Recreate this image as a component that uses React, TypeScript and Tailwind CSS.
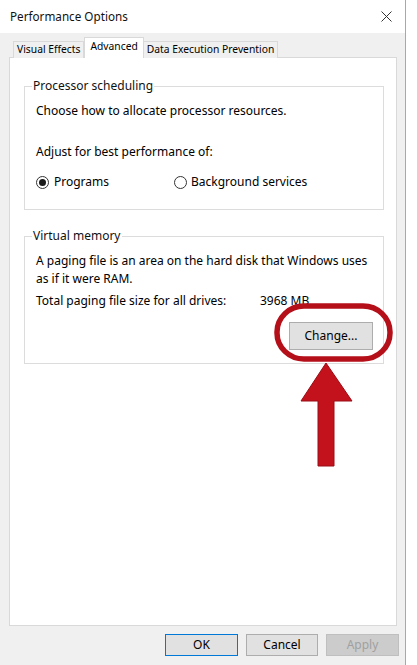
import React from "react";

function Radio({ checked }: { checked: boolean }) {
  return (
    <span className="w-[13px] h-[13px] rounded-full border border-[#333333] bg-white flex items-center justify-center shrink-0">
      {checked && <span className="w-[7px] h-[7px] rounded-full bg-[#1a1a1a]" />}
    </span>
  );
}

export default function App() {
  return (
    <div
      className="relative w-[417px] h-[665px] bg-white overflow-hidden flex text-black"
      style={{ fontFamily: '"Noto Sans", "Open Sans", sans-serif' }}
    >
      <div className="w-[406px] h-full flex flex-col bg-[#f0f0f0] border-r border-[#a8a8a8] shrink-0">
        {/* Title bar */}
        <div className="h-[33px] bg-white flex items-center justify-between pl-[10px] pr-[13px] shrink-0">
          <span className="text-[11.7px] text-[#111]">Performance Options</span>
          <svg width="11" height="11" viewBox="0 0 11 11" className="mt-[-1px]">
            <path d="M0.5 0.5 L10.5 10.5 M10.5 0.5 L0.5 10.5" stroke="#333" strokeWidth="1" fill="none" />
          </svg>
        </div>
        {/* Tabs */}
        <div className="h-[24px] flex items-end pl-[13px] relative z-10 shrink-0 text-[10.3px]">
          <div className="h-[17px] px-[3px] flex items-center border border-b-0 border-[#d9d9d9] bg-[#f0f0f0] mb-[-1px]">
            Visual Effects
          </div>
          <div className="h-[21px] px-[5px] flex items-center border border-b-0 border-[#d9d9d9] bg-white pb-[3px] mb-[-1px]">
            Advanced
          </div>
          <div className="h-[17px] px-[3px] flex items-center border border-b-0 border-l-0 border-[#d9d9d9] bg-[#f0f0f0] mb-[-1px]">
            Data Execution Prevention
          </div>
        </div>
        {/* Panel */}
        <div className="ml-[9px] w-[388px] h-[569px] bg-white border border-[#d9d9d9] pl-[14px] pt-[20px] shrink-0 text-[12px]">
          <fieldset className="w-[360px] h-[132px] border border-[#dcdcdc]">
            <legend className="ml-[7px] px-[1px] leading-[16px] text-[#111]">Processor scheduling</legend>
            <div className="pl-[11px]">
              <div className="leading-[18px] mt-[8px]">Choose how to allocate processor resources.</div>
              <div className="leading-[18px] mt-[23px]">Adjust for best performance of:</div>
              <div className="flex items-center mt-[12px] h-[18px]">
                <div className="flex items-center w-[138px] gap-[5px]">
                  <Radio checked />
                  <span>Programs</span>
                </div>
                <div className="flex items-center gap-[4px]">
                  <Radio checked={false} />
                  <span>Background services</span>
                </div>
              </div>
            </div>
          </fieldset>
          <fieldset className="w-[360px] h-[136px] border border-[#dcdcdc] mt-[18px]">
            <legend className="ml-[7px] px-[1px] leading-[16px] text-[#111]">Virtual memory</legend>
            <div className="pl-[11px]">
              <div className="leading-[18px] mt-[8px]">
                A paging file is an area on the hard disk that Windows uses
                <br />
                as if it were RAM.
              </div>
              <div className="flex leading-[18px] mt-[4px]">
                <span className="w-[224px]">Total paging file size for all drives:</span>
                <span>3968 MB</span>
              </div>
              <div className="flex justify-end pr-[10px] mt-[12px]">
                <button className="w-[84px] h-[28px] bg-[#e1e1e1] border border-[#adadad] text-[12px]">Change...</button>
              </div>
            </div>
          </fieldset>
        </div>
        {/* Buttons */}
        <div className="flex justify-end gap-[8px] pr-[6px] mt-[8px] text-[12px]">
          <button className="w-[73px] h-[22px] bg-[#e1e1e1] border border-[#0078d7]">OK</button>
          <button className="w-[72px] h-[22px] bg-[#e1e1e1] border border-[#adadad]">Cancel</button>
          <button className="w-[73px] h-[22px] bg-[#cccccc] border border-[#bfbfbf] text-[#a0a0a0]">Apply</button>
        </div>
      </div>

      {/* Annotation overlay */}
      <svg className="absolute left-0 top-0 pointer-events-none" width="417" height="665" viewBox="0 0 417 665">
        <rect x="277" y="306" width="113" height="53" rx="27" ry="26" fill="none" stroke="#b5101a" strokeWidth="5.5" />
        <polygon points="326,363 352,401 334,401 334,466 318,466 318,401 301,401" fill="#c4121c" stroke="#9a0c14" strokeWidth="1" />
      </svg>
    </div>
  );
}
